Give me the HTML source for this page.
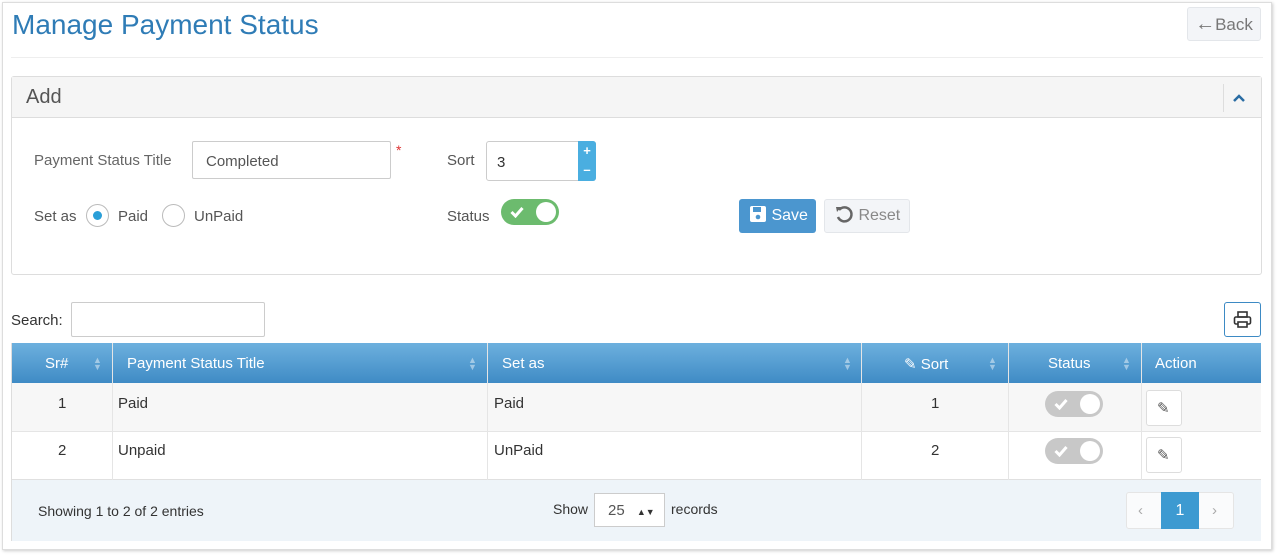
<!DOCTYPE html>
<html><head><style>
*{box-sizing:border-box;margin:0;padding:0}
body{width:1280px;height:559px;background:#fff;font-family:"Liberation Sans",sans-serif;font-size:15px;color:#333;position:relative;overflow:hidden}
.a{position:absolute}
.frame{left:2px;top:2px;width:1270px;height:548px;border:1px solid #ddd;box-shadow:1px 1px 3px #ccc}
.t{white-space:nowrap}
.tog{position:absolute;width:58px;height:26px;border-radius:13px}
.tog .k{position:absolute;right:3px;top:3px;width:20px;height:20px;border-radius:50%;background:#fff}
.ed{width:36px;height:36px;border:1px solid #ddd;border-radius:3px;background:#fff}
.th{color:#fff;font-size:15px;top:355px}
.arr{color:rgba(255,255,255,.45);font-size:9px;line-height:7px;top:357px}
</style></head><body>
<div class="a frame"></div>
<div class="a t" style="left:12px;top:9px;font-size:28px;color:#2f7cb6">Manage Payment Status</div>
<div class="a t" style="left:1187px;top:7px;width:74px;height:34px;background:#f3f5f8;border:1px solid #e3e6ea;border-radius:3px;color:#777;font-size:17px;line-height:32px;text-align:center"><span style="font-size:20px">&#8592;</span>Back</div>
<div class="a" style="left:11px;top:57px;width:1252px;border-top:1px solid #eee"></div>

<div class="a" style="left:11px;top:76px;width:1251px;height:199px;border:1px solid #ddd;border-radius:3px"></div>
<div class="a" style="left:12px;top:77px;width:1249px;height:41px;background:#f5f5f5;border-bottom:1px solid #ddd"></div>
<div class="a t" style="left:26px;top:86px;font-size:20px;color:#555">Add</div>
<div class="a" style="left:1223px;top:84px;height:28px;border-left:1px solid #ddd"></div>
<svg class="a" style="left:1232px;top:93px" width="14" height="10"><path d="M2 8L7 3L12 8" stroke="#2a6ca3" stroke-width="2.5" fill="none"/></svg>

<div class="a t" style="left:34px;top:152px;color:#666">Payment Status Title</div>
<div class="a t" style="left:192px;top:141px;width:199px;height:38px;border:1px solid #ccc;border-radius:2px;padding:11px 13px;color:#555">Completed</div>
<div class="a" style="left:396px;top:142px;color:#d33;font-size:14px">*</div>
<div class="a t" style="left:447px;top:152px;color:#555">Sort</div>
<div class="a t" style="left:486px;top:141px;width:110px;height:40px;border:1px solid #ccc;border-radius:3px;padding:12px 10px;color:#333">3</div>
<div class="a" style="left:578px;top:141px;width:18px;height:40px;background:#4aaee0;color:#fff;font-size:13px;font-weight:bold;text-align:center;line-height:19px;border-radius:0 3px 3px 0">+<br>–</div>
<div class="a t" style="left:34px;top:208px;color:#555">Set as</div>
<div class="a" style="left:86px;top:204px;width:23px;height:23px;border:1px solid #bbb;border-radius:50%"></div>
<div class="a" style="left:93px;top:211px;width:9px;height:9px;background:#2a9fd8;border-radius:50%"></div>
<div class="a t" style="left:118px;top:208px;color:#555">Paid</div>
<div class="a" style="left:162px;top:204px;width:23px;height:23px;border:1px solid #bbb;border-radius:50%"></div>
<div class="a t" style="left:194px;top:208px;color:#555">UnPaid</div>
<div class="a t" style="left:447px;top:208px;color:#555">Status</div>
<div class="tog" style="left:501px;top:199px;background:#6cbb6e"><svg style="position:absolute;left:9px;top:7px" width="14" height="12"><path d="M1.5 6L5.5 10L12.5 2" stroke="#fff" stroke-width="3" fill="none"/></svg><div class="k"></div></div>
<div class="a t" style="left:739px;top:199px;width:77px;height:34px;background:#4b96cf;border-radius:3px;color:#fff;font-size:16px;line-height:34px;padding-left:10px"><svg width="18" height="18" style="vertical-align:-3px" viewBox="0 0 18 18"><rect x="1" y="1" width="16" height="16" rx="2" fill="#fff"/><rect x="4" y="2" width="8" height="5" fill="#4b96cf"/><circle cx="9" cy="12" r="2.3" fill="#4b96cf"/></svg> Save</div>
<div class="a t" style="left:824px;top:199px;width:86px;height:34px;background:#f3f5f8;border:1px solid #e3e6ea;border-radius:3px;color:#888;font-size:16px;line-height:32px;padding-left:9px"><svg width="20" height="20" style="vertical-align:-4px" viewBox="0 0 20 20"><path d="M5 6A7 7 0 1 1 4 13" stroke="#666" stroke-width="2.5" fill="none"/><path d="M2 3L7 3L3 8Z" fill="#666"/></svg> Reset</div>

<div class="a t" style="left:11px;top:312px;color:#333">Search:</div>
<div class="a" style="left:71px;top:302px;width:194px;height:35px;border:1px solid #ccc;border-radius:2px"></div>
<div class="a" style="left:1224px;top:302px;width:37px;height:35px;border:1px solid #3d8ac4;border-radius:3px"></div>
<svg class="a" style="left:1233px;top:311px" width="19" height="17" viewBox="0 0 19 17"><rect x="5" y="1" width="9" height="5" fill="none" stroke="#333" stroke-width="1.6"/><rect x="1.5" y="6" width="16" height="7" rx="1.5" fill="none" stroke="#333" stroke-width="1.6"/><rect x="5" y="11" width="9" height="5" fill="#fff" stroke="#333" stroke-width="1.6"/></svg>

<div class="a" style="left:11px;top:343px;width:1250px;height:198px;border:1px solid #ddd"></div>
<div class="a" style="left:12px;top:343px;width:1249px;height:40px;background:linear-gradient(#6db0de,#3f8bc5)"></div>
<div class="a" style="left:12px;top:383px;width:1249px;height:49px;background:#f7f7f7;border-bottom:1px solid #e5e5e5"></div>
<div class="a" style="left:12px;top:432px;width:1249px;height:48px;background:#fff;border-bottom:1px solid #e0e0e0"></div>
<div class="a" style="left:12px;top:480px;width:1249px;height:61px;background:#eef4f9"></div>
<div class="a" style="left:112px;top:343px;height:137px;border-left:1px solid #e5e5e5"></div>
<div class="a" style="left:487px;top:343px;height:137px;border-left:1px solid #e5e5e5"></div>
<div class="a" style="left:861px;top:343px;height:137px;border-left:1px solid #e5e5e5"></div>
<div class="a" style="left:1008px;top:343px;height:137px;border-left:1px solid #e5e5e5"></div>
<div class="a" style="left:1141px;top:343px;height:137px;border-left:1px solid #e5e5e5"></div>

<div class="a t th" style="left:45px">Sr#</div><div class="a arr" style="left:93px">▲<br>▼</div>
<div class="a t th" style="left:127px">Payment Status Title</div><div class="a arr" style="left:468px">▲<br>▼</div>
<div class="a t th" style="left:502px">Set as</div><div class="a arr" style="left:843px">▲<br>▼</div>
<div class="a t th" style="left:904px">✎ Sort</div><div class="a arr" style="left:988px">▲<br>▼</div>
<div class="a t th" style="left:1048px">Status</div><div class="a arr" style="left:1122px">▲<br>▼</div>
<div class="a t th" style="left:1155px">Action</div>

<div class="a t" style="left:58px;top:395px">1</div>
<div class="a t" style="left:118px;top:395px">Paid</div>
<div class="a t" style="left:494px;top:395px">Paid</div>
<div class="a t" style="left:931px;top:395px">1</div>
<div class="tog" style="left:1045px;top:391px;background:#c8c8c8"><svg style="position:absolute;left:9px;top:7px" width="14" height="12"><path d="M1.5 6L5.5 10L12.5 2" stroke="#fff" stroke-width="3" fill="none"/></svg><div class="k"></div></div>
<div class="a ed" style="left:1146px;top:390px"></div>
<div class="a" style="left:1157px;top:399px;color:#555;font-size:15px">✎</div>

<div class="a t" style="left:58px;top:442px">2</div>
<div class="a t" style="left:118px;top:442px">Unpaid</div>
<div class="a t" style="left:494px;top:442px">UnPaid</div>
<div class="a t" style="left:931px;top:442px">2</div>
<div class="tog" style="left:1045px;top:438px;background:#c8c8c8"><svg style="position:absolute;left:9px;top:7px" width="14" height="12"><path d="M1.5 6L5.5 10L12.5 2" stroke="#fff" stroke-width="3" fill="none"/></svg><div class="k"></div></div>
<div class="a ed" style="left:1146px;top:437px"></div>
<div class="a" style="left:1157px;top:446px;color:#555;font-size:15px">✎</div>

<div class="a t" style="left:38px;top:503px;font-size:14px">Showing 1 to 2 of 2 entries</div>
<div class="a t" style="left:553px;top:501px;font-size:14px">Show</div>
<div class="a t" style="left:594px;top:493px;width:71px;height:34px;border:1px solid #ccc;background:#fff;padding:8px 13px;color:#555">25 <span style="font-size:9px;color:#333;margin-left:8px">▲▼</span></div>
<div class="a t" style="left:671px;top:501px;font-size:14px">records</div>
<div class="a" style="left:1126px;top:492px;width:108px;height:37px;border:1px solid #e5e5e5;border-radius:3px;background:#fafbfc"></div>
<div class="a t" style="left:1138px;top:502px;color:#aaa;font-size:15px">‹</div>
<div class="a t" style="left:1161px;top:492px;width:38px;height:37px;background:#3d9ad1;color:#fff;text-align:center;line-height:37px;font-size:16px">1</div>
<div class="a t" style="left:1212px;top:502px;color:#aaa;font-size:15px">›</div>
</body></html>
